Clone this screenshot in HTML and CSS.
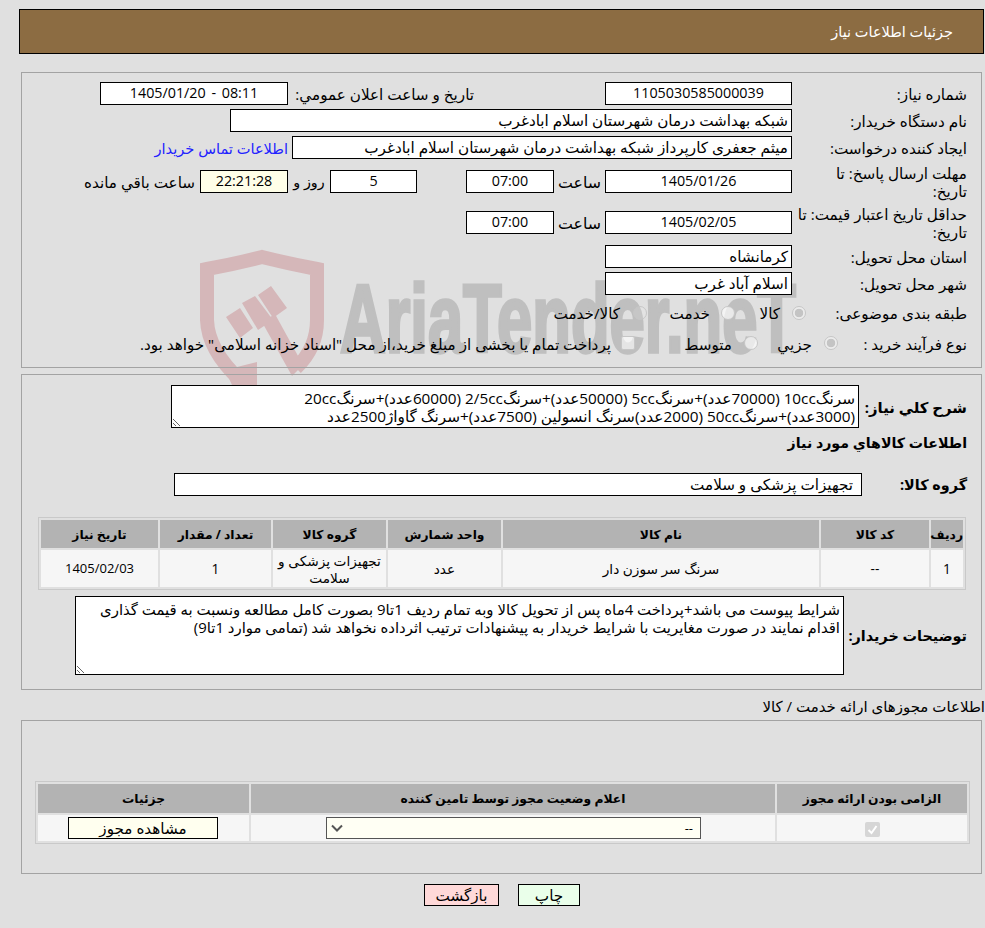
FILE: index.html
```html
<!DOCTYPE html>
<html lang="fa" dir="rtl">
<head>
<meta charset="utf-8">
<title>جزئیات اطلاعات نیاز</title>
<link rel="stylesheet" href="styles.css">
</head>
<body>
<svg class="watermark" width="985" height="928" viewBox="0 0 985 928" aria-hidden="true">
  <path class="wm-ring" d="M296 368 Q317 348 317 320 L317 269 Q290 264 262 257 Q235 264 207 269 L207 320 Q208 350 240 380"/>
  <path class="wm-fill" d="M226 317 L240 308 L253 328 L240 338Z M242 303 L255 296 L273 320 L258 330Z M258 295 L271 286 L287 308 L273 318Z M262 322 L275 314 L303 365 L292 376Z M225 370 L257 362 L257 385 L232 385Z"/>
  <text class="wm-text" x="340" y="352" textLength="456" lengthAdjust="spacingAndGlyphs">AriaTender.neT</text>
</svg>

<header class="page-title"><h1>جزئیات اطلاعات نیاز</h1></header>

<section class="panel panel-main">
  <div class="row">
    <label class="lbl">شماره نیاز:</label>
    <div class="box w-date num">1105030585000039</div>
    <label class="lbl-public">تاریخ و ساعت اعلان عمومي:</label>
    <div class="box w-public num ltr">1405/01/20 - 08:11</div>
  </div>
  <div class="row mt4">
    <label class="lbl">نام دستگاه خریدار:</label>
    <div class="box w-buyer">شبکه بهداشت درمان شهرستان اسلام ابادغرب</div>
  </div>
  <div class="row mt4">
    <label class="lbl">ایجاد کننده درخواست:</label>
    <div class="box w-creator">میثم جعفری کارپرداز شبکه بهداشت درمان شهرستان اسلام ابادغرب</div>
    <a class="contact" href="#">اطلاعات تماس خریدار</a>
  </div>
  <div class="row mt11">
    <label class="lbl two">مهلت ارسال پاسخ: تا<br>تاریخ:</label>
    <div class="box w-date num">1405/01/26</div>
    <span class="time-lbl">ساعت</span>
    <div class="box w-time num">07:00</div>
    <div class="box w-days num">5</div>
    <span class="days-lbl">روز و</span>
    <div class="box w-timer num">22:21:28</div>
    <span class="left-lbl">ساعت باقي مانده</span>
  </div>
  <div class="row mt18">
    <label class="lbl two">حداقل تاریخ اعتبار قیمت: تا<br>تاریخ:</label>
    <div class="box w-date num">1405/02/05</div>
    <span class="time-lbl">ساعت</span>
    <div class="box w-time num">07:00</div>
  </div>
  <div class="row mt11">
    <label class="lbl">استان محل تحویل:</label>
    <div class="box w-date">کرمانشاه</div>
  </div>
  <div class="row mt4">
    <label class="lbl">شهر محل تحویل:</label>
    <div class="box w-date">اسلام آباد غرب</div>
  </div>
  <div class="row choice mt8">
    <label class="lbl-cat">طبقه بندی موضوعی:</label>
    <input class="radio" type="radio" name="cat" checked disabled><span class="t-a">کالا</span>
    <input class="radio strong" type="radio" name="cat" disabled><span class="t-b">خدمت</span>
    <input class="radio" type="radio" name="cat" disabled><span class="t-c">کالا/خدمت</span>
  </div>
  <div class="row choice proc mt11">
    <label class="lbl-proc">نوع فرآیند خرید :</label>
    <input class="radio" type="radio" name="proc" checked disabled><span class="t-d">جزيي</span>
    <input class="radio strong" type="radio" name="proc" disabled><span class="t-e">متوسط</span>
    <input class="tick" type="checkbox" disabled>
    <span class="t-f">پرداخت تمام یا بخشی از مبلغ خرید،از محل "اسناد خزانه اسلامی" خواهد بود.</span>
  </div>
</section>

<section class="panel panel-items">
  <div class="row summary">
    <label class="lbl-b lbl-summary">شرح کلي نیاز:</label>
    <textarea class="area area-summary" readonly>سرنگ10cc (70000عدد)+سرنگ5cc (50000عدد)+سرنگ2/5cc (60000عدد)+سرنگ20cc
(3000عدد)+سرنگ50cc (2000عدد)سرنگ انسولین (7500عدد)+سرنگ گاواژ2500عدد</textarea>
  </div>
  <h2 class="items-title">اطلاعات کالاهاي مورد نیاز</h2>
  <div class="row group-row">
    <label class="lbl-b lbl-group">گروه کالا:</label>
    <div class="box w-group">تجهیزات پزشکی و سلامت</div>
  </div>
  <table class="grid grid-items">
    <thead>
      <tr>
        <th class="i1">ردیف</th><th class="i2">کد کالا</th><th class="i3">نام کالا</th><th class="i4">واحد شمارش</th><th class="i5">گروه کالا</th><th class="i6">تعداد / مقدار</th><th class="i7">تاریخ نیاز</th>
      </tr>
    </thead>
    <tbody>
      <tr>
        <td>1</td><td>--</td><td>سرنگ سر سوزن دار</td><td>عدد</td><td>تجهیزات پزشکی و سلامت</td><td>1</td><td class="td-date">1405/02/03</td>
      </tr>
    </tbody>
  </table>
  <div class="row notes">
    <label class="lbl-b lbl-notes">توضیحات خریدار:</label>
    <textarea class="area area-notes" readonly>شرایط پیوست می باشد+پرداخت 4ماه پس از تحویل کالا وبه تمام ردیف 1تا9 بصورت کامل مطالعه ونسبت به قیمت گذاری
اقدام نمایند در صورت مغایریت با شرایط خریدار به پیشنهادات ترتیب اثرداده نخواهد شد (تمامی موارد 1تا9)</textarea>
  </div>
</section>

<h3 class="licence-title">اطلاعات مجوزهای ارائه خدمت / کالا</h3>
<section class="panel panel-licence">
  <table class="grid grid-licence">
    <thead>
      <tr><th class="l1">الزامی بودن ارائه مجوز</th><th class="l2">اعلام وضعیت مجوز توسط تامین کننده</th><th class="l3">جزئیات</th></tr>
    </thead>
    <tbody>
      <tr>
        <td><input class="check" type="checkbox" checked disabled></td>
        <td><select class="status"><option>--</option></select></td>
        <td><button class="view" type="button">مشاهده مجوز</button></td>
      </tr>
    </tbody>
  </table>
</section>

<div class="actions">
  <button class="btn btn-print" type="button">چاپ</button>
  <button class="btn btn-back" type="button">بازگشت</button>
</div>
</body>
</html>
```

FILE: styles.css
```css
html { background: #e0e0e0; }
* { box-sizing: border-box; }
body {
  margin: 0;
  height: 928px;
  overflow: hidden;
  position: relative;
  font-family: "Open Sans", "DejaVu Sans", sans-serif;
  font-size: 15.2px;
  color: #000;
  direction: rtl;
}
.watermark { position: absolute; left: 0; top: 0; z-index: -1; }
.wm-ring { fill: none; stroke: #d5b7b9; stroke-width: 14; }
.wm-fill { fill: #d5b7b9; }
.wm-text { font-family: "Liberation Sans", sans-serif; font-weight: 700; font-size: 96px; fill: #bfbfbf; stroke: #bfbfbf; stroke-width: 3.5; direction: ltr; }

.page-title {
  margin: 9px 1px 0 0;
  height: 45px;
  width: 965px;
  background: #8c6c42;
  border: 1px solid #000;
  display: flex;
  align-items: center;
  padding-right: 30px;
}
.page-title h1 { margin: 0; font-size: 14.5px; font-weight: 400; color: #fff; }

.panel { border: 1px solid #a3a3a3; width: 961px; margin-right: 3px; }
.panel-main { margin-top: 18px; height: 296px; padding: 9px 14px 0 0; }
.panel-items { margin-top: 6px; height: 316px; padding: 10px 14px 0 0; }
.panel-licence { margin-top: 2px; height: 154px; padding: 60px 11px 0 0; }

.row { display: flex; align-items: center; height: 23px; }
.mt4 { margin-top: 4px; }
.mt8 { margin-top: 8px; }
.mt11 { margin-top: 11px; }
.mt18 { margin-top: 18px; }

.lbl { width: 175px; flex: none; white-space: nowrap; }
.lbl.two { line-height: 18px; }
.box {
  flex: none;
  height: 23px;
  line-height: 20px;
  background: #fff;
  border: 1px solid #000;
  padding: 0 3px;
  white-space: nowrap;
  overflow: hidden;
}
.num { font-size: 14.3px; text-align: center; }
.ltr { direction: ltr; word-spacing: 2px; }
.w-date { width: 187px; }
.w-public { width: 188px; }
.lbl-public { width: 186px; margin-right: 131px; white-space: nowrap; }
.w-buyer { width: 562px; }
.w-creator { width: 500px; }
.contact { margin-right: 4px; color: #22f; text-decoration: none; white-space: nowrap; font-size: 14.6px; }
.time-lbl { width: 51px; text-align: center; flex: none; font-size: 15.8px; }
.w-time { width: 88px; }
.w-days { width: 87px; margin-right: 49px; }
.days-lbl { width: 42px; text-align: center; flex: none; font-size: 14.3px; }
.w-timer { width: 88px; background: #ffffe8; }
.left-lbl { margin-right: 5px; white-space: nowrap; }

.choice { height: 20px; }
.lbl-cat { width: 161px; flex: none; white-space: nowrap; }
.lbl-proc { width: 129px; flex: none; white-space: nowrap; }
.radio, .tick {
  appearance: none;
  margin: 0;
  flex: none;
  width: 14px;
  height: 14px;
  border: 1px solid #c6c6c6;
  background: rgba(255, 255, 255, .12);
}
.radio { border-radius: 50%; }
.radio.strong { background: rgba(255, 255, 255, .65); }
.radio:checked { background: radial-gradient(circle, #c4c4c4 0 4px, #ececec 4.6px); }
.tick { border-radius: 2px; background: rgba(255, 255, 255, .6); }
.proc input { margin-bottom: 3px; }
.t-a { width: 45px; flex: none; margin-right: 12px; white-space: nowrap; }
.t-b { width: 63px; flex: none; margin-right: 11px; white-space: nowrap; }
.t-c { margin-right: 13px; white-space: nowrap; }
.t-d { width: 54px; flex: none; margin-right: 12px; white-space: nowrap; }
.t-e { width: 97px; flex: none; margin-right: 12px; white-space: nowrap; }
.t-f { margin-right: 10px; white-space: nowrap; }

.lbl-b { font-weight: 700; flex: none; white-space: nowrap; font-size: 14.4px; }
.lbl-b.lbl-summary { font-size: 14.9px; }
.area {
  display: block;
  background: #fff;
  border: 1px solid #000;
  border-radius: 0;
  font: inherit;
  line-height: 18px;
  color: #000;
  padding: 3px;
  overflow: hidden;
  white-space: pre;
  margin: 0;
  outline: none;
}
.summary { height: 43px; }
.lbl-summary { width: 108px; }
.area-summary { width: 688px; height: 43px; font-size: 15.3px; }
.items-title { margin: 6px 0 0; height: 18px; line-height: 18px; font-size: 14.2px; font-weight: 700; }
.group-row { margin-top: 21px; }
.lbl-group { width: 105px; }
.w-group { width: 688px; padding-right: 8px; }
.notes { height: 79px; margin-top: 6px; }
.lbl-notes { width: 123px; }
.area-notes { width: 769px; height: 79px; font-size: 14.9px; }

.grid {
  border-collapse: separate;
  border-spacing: 2px;
  border: 1px solid #c9c9c9;
  table-layout: fixed;
  text-align: center;
}
.grid th { background: #b3b3b3; font-size: 12.3px; font-weight: 700; padding: 0; }
.grid td { background: #f6f6f6; padding: 0; font-size: 13.7px; }
.grid td.td-date { font-size: 13px; }
.grid-items { width: 928px; height: 73px; margin: 21px 1px 0 0; }
.grid-items th { height: 28px; }
.grid-items td { height: 37px; line-height: 17px; }
.i1 { width: 32px; } .i2 { width: 108px; } .i3 { width: 316px; } .i4 { width: 113px; }
.i5 { width: 113px; } .i6 { width: 111px; } .i7 { width: 117px; }

.licence-title { margin: 5px 0 0; height: 23px; line-height: 23px; font-size: 15px; font-weight: 400; white-space: nowrap; }
.grid-licence { width: 935px; height: 62px; }
.grid-licence th { height: 29px; }
.grid-licence td { height: 26px; }
.l1 { width: 190px; } .l2 { width: 524px; } .l3 { width: 211px; }
.check {
  appearance: none;
  margin: 0;
  width: 15px;
  height: 15px;
  vertical-align: middle;
  border-radius: 2px;
  background: #d6d6d6 url("data:image/svg+xml,%3Csvg xmlns='http://www.w3.org/2000/svg' width='15' height='15'%3E%3Cpath d='M3.5 8l3 3 5-7' fill='none' stroke='%23fff' stroke-width='2'/%3E%3C/svg%3E") center no-repeat;
}
.status {
  appearance: none;
  display: block;
  width: 375px;
  height: 22px;
  margin-right: 74px;
  padding: 0 7px;
  background: #fffff4 url("data:image/svg+xml,%3Csvg xmlns='http://www.w3.org/2000/svg' width='12' height='8'%3E%3Cpath d='M1 1.5l5 5 5-5' fill='none' stroke='%23555' stroke-width='2'/%3E%3C/svg%3E") 4px center no-repeat;
  border: 1px solid #555;
  border-radius: 0;
  font: inherit;
  font-size: 13px;
  color: #000;
}
.view {
  display: block;
  width: 150px;
  height: 22px;
  margin-right: 31px;
  background: #ffffef;
  border: 1px solid #000;
  border-radius: 0;
  padding: 0;
  font: inherit;
  font-size: 15.2px;
  color: #000;
}
.actions { display: flex; margin-top: 10px; margin-right: 405px; }
.btn { height: 22px; border: 1px solid #000; border-radius: 0; padding: 0; font: inherit; color: #000; }
.btn-print { width: 62px; background: #eaffea; }
.btn-back { width: 75px; margin-right: 19px; background: #ffd9d9; }
```
